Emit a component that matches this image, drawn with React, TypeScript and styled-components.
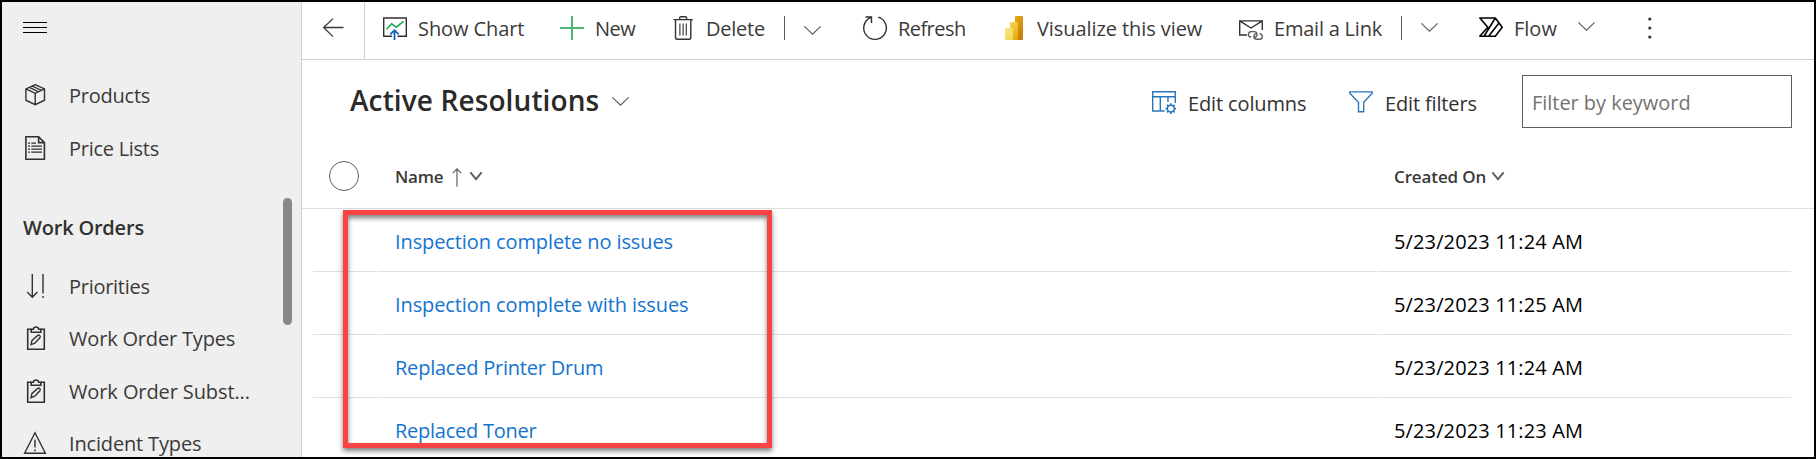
import React from "react";
import styled, { createGlobalStyle } from "styled-components";

const Global = createGlobalStyle`
  *, *::before, *::after { box-sizing: border-box; }
  body {
    margin: 0;
    background: #fff;
    font-family: "Open Sans", "Noto Sans", sans-serif;
    font-size: 20px;
    line-height: 28px;
    color: #3b3a39;
  }
  svg { display: block; flex: none; overflow: visible; }
`;

const Frame = styled.div`
  display: flex;
  width: 1816px;
  height: 459px;
  border: 2px solid #000;
  overflow: hidden;
  background: #fff;
`;

const Label = styled.span<{ $track?: number }>`
  white-space: nowrap;
  letter-spacing: ${(p) => p.$track ?? 0}px;
`;

/* Sidebar */

const Sidebar = styled.nav`
  position: relative;
  flex: none;
  width: 300px;
  height: 455px;
  border-right: 1px solid #d2d0ce;
  background: #efefef;
  overflow: hidden;
`;

const MenuButton = styled.div`
  height: 67px;
  padding: 20px 0 0 21px;
`;

const NavItem = styled.div<{ $height: number }>`
  display: flex;
  align-items: center;
  gap: 22px;
  height: ${(p) => p.$height}px;
  padding-left: 21px;

  svg { margin-top: -2px; }
`;

const NavHeading = styled.div`
  height: 85px;
  padding: 39px 0 0 21px;
  font-weight: 600;
  color: #323130;
`;

const ScrollThumb = styled.div`
  position: absolute;
  top: 196px;
  left: 281px;
  width: 9px;
  height: 127px;
  border-radius: 5px;
  background: #888;
`;

/* Main area */

const Main = styled.main`
  flex: 1;
  min-width: 0;
`;

const Toolbar = styled.div`
  display: flex;
  height: 58px;
  border-bottom: 1px solid #d2d0ce;
`;

const BackCell = styled.div`
  flex: none;
  width: 63px;
  border-right: 1px solid #d2d0ce;
  padding: 16px 0 0 20px;
`;

const Commands = styled.div`
  display: flex;
  padding: 14px 0 0 18px;
  height: 57px;
`;

const Command = styled.div<{ $width: number }>`
  display: flex;
  gap: 11px;
  width: ${(p) => p.$width}px;
  height: 24px;
`;

const CommandLabel = styled(Label)`
  margin-top: -1px;
`;

const Divider = styled.div`
  width: 1px;
  height: 24px;
  margin-right: 19px;
  background: #605e5c;
`;

const ChevronSlot = styled.div<{ $width: number; $top: number }>`
  width: ${(p) => p.$width}px;
  padding-top: ${(p) => p.$top}px;
`;

const ViewBar = styled.div`
  display: flex;
  height: 85px;
  padding: 15px 22px 0 48px;
`;

const ViewTitle = styled.h1`
  display: flex;
  gap: 13px;
  flex: 1;
  margin: 0;
  padding-top: 6px;
  font-size: 28px;
  font-weight: 600;
  line-height: 38px;
  color: #2b2a29;
`;

const TitleChevron = styled.span`
  padding-top: 16px;
`;

const ViewAction = styled.div<{ $width: number }>`
  display: flex;
  gap: 12px;
  width: ${(p) => p.$width}px;
  padding-top: 14px;
  color: #323130;
`;

const ActionLabel = styled(Label)`
  margin-top: 1px;
`;

const IconDrop = styled.span`
  padding-top: 2px;
`;

const FilterInput = styled.div`
  width: 270px;
  height: 53px;
  border: 1px solid #605e5c;
  padding: 13px 0 0 9px;
  color: #757371;
`;

/* Grid */

const HeaderRow = styled.div`
  display: grid;
  grid-template-columns: 93px 999px 1fr;
  height: 64px;
  border-bottom: 1px solid #e1dfdd;
  font-size: 17px;
  font-weight: 600;
`;

const HeaderCell = styled.div`
  display: flex;
  padding-top: 18px;
`;

const SelectAll = styled.div`
  width: 30px;
  height: 30px;
  margin: 16px 0 0 27px;
  border: 1px solid #605e5c;
  border-radius: 50%;
`;

const Rows = styled.div`
  position: relative;
  height: 248px;
  padding: 0 23px 0 11px;
`;

const Row = styled.div`
  display: grid;
  grid-template-columns: 63px 999px 1fr;
  column-gap: 1px;
  height: 63px;
`;

const Cell = styled.div<{ $pad?: number }>`
  border-bottom: 1px solid #e1dfdd;
  padding: 19px 0 0 ${(p) => p.$pad ?? 0}px;
  color: #000;
`;

const RecordLink = styled(Label)`
  color: #1374cf;
`;

const Highlight = styled.div`
  position: absolute;
  top: 1px;
  left: 41px;
  width: 429px;
  height: 238px;
  border: 5px solid #fb4343;
  box-shadow: 0 3px 5px rgba(0, 0, 0, 0.5), inset 0 3px 5px rgba(0, 0, 0, 0.5);
`;

/* Icons */

const Chevron = ({ w = 17, h = 9, color = "#605e5c", weight = 1.2 }) => (
  <svg width={w} height={h} viewBox={`0 0 ${w} ${h}`} fill="none" stroke={color} strokeWidth={weight}>
    <path d={`M.4.4 L${w / 2} ${h - 0.8} L${w - 0.4}.4`} />
  </svg>
);

const Icon = ({ children, color = "#323130", weight = 1.4 }: { children: React.ReactNode; color?: string; weight?: number }) => (
  <svg width="24" height="24" viewBox="0 0 24 24" fill="none" stroke={color} strokeWidth={weight}>
    {children}
  </svg>
);

const MenuIcon = () => (
  <svg width="24" height="12" viewBox="0 0 24 12" stroke="#000" strokeWidth="1">
    <path d="M0 .5H24M0 5.5H24M0 10.5H24" />
  </svg>
);

const BoxIcon = () => (
  <Icon>
    <path d="M12.2 1.7 21.5 5.9V17.2L12.2 21.7 2.9 17.2V5.9ZM2.9 5.9 12.2 10.3 21.5 5.9M12.2 10.3V21.5" />
    <path strokeWidth="1.2" d="M6.2 4.4 15.4 8.6M9.2 3.1 18.4 7.3" />
  </Icon>
);

const ListIcon = () => (
  <Icon weight={1.6}>
    <path d="M2.9.8H15.6L21.4 6.6V23.2H2.9ZM15.6.8V6.6H21.4" />
    <path strokeWidth="1.3" d="M5 7.2H7M8.3 7.2H13M5 10.2H7M8.3 10.2H19M5 13.2H7M8.3 13.2H19M5 16.2H7M8.3 16.2H19" />
  </Icon>
);

const PriorityIcon = () => (
  <Icon weight={1.4}>
    <path d="M9.3 0V23M4.2 18 9.3 23.2 14.4 18M20 0V19.5M20 22V24" />
  </Icon>
);

const ClipboardIcon = () => (
  <Icon weight={1.6}>
    <path d="M8.5 3.2H4.7V23.2H21.3V3.2H17.5" />
    <path d="M8.2 6.2V3.2H10.3C10.6 1.8 11.6 1 13 1S15.4 1.8 15.7 3.2H17.8V6.2Z" />
    <path d="M8 18.6 9 14.4 14.8 9.4C16.3 8.4 18 10.2 16.9 11.7L11.8 17.2Z" strokeWidth="1.4" />
  </Icon>
);

const WarningIcon = () => (
  <Icon weight={1.4}>
    <path d="M12 1.8 22.4 22.3H1.6ZM12 8.5V16.5M12 18.6V20.2" />
  </Icon>
);

const BackIcon = () => (
  <svg width="24" height="20" viewBox="0 0 24 20" fill="none" stroke="#3b3a39" strokeWidth="1.3">
    <path d="M21.5 9.5H1.5M11 .6 1.6 9.5 11 18.6" />
  </svg>
);

const ChartIcon = () => (
  <Icon weight={1.4}>
    <path d="M9 20.3H.7V2H23.3V20.3H14.5" />
    <path stroke="#1aab50" strokeWidth="1.6" d="M3.5 13.2 8.7 7.8 13.3 11.2 20.5 5.3" />
    <path stroke="#1267b4" strokeWidth="1.8" d="M11.5 24V14.8M7.3 18.4 11.5 14.2 15.7 18.4" />
  </Icon>
);

const PlusIcon = () => (
  <Icon color="#4bb777" weight={2}>
    <path d="M0 12H24M12 0V24" />
  </Icon>
);

const TrashIcon = () => (
  <Icon>
    <path d="M2.5 3.6H21.8M8.7 3.6V2C8.7 1.2 9.2.7 10 .7H14.3C15.1.7 15.6 1.2 15.6 2V3.6M4.5 3.6V21.5C4.5 22.6 5.2 23.3 6.3 23.3H18C19.1 23.3 19.8 22.6 19.8 21.5V3.6" />
    <path strokeWidth="1.1" d="M8.9 7.5V19.5M12.1 7.5V19.5M15.3 7.5V19.5" />
  </Icon>
);

const RefreshIcon = () => (
  <Icon weight={1.4}>
    <path d="M15.2 1.2A11.3 11.3 0 1 1 7.5 1.7M2.5 1H8.5V7" />
  </Icon>
);

const PowerBiIcon = () => (
  <svg width="24" height="24" viewBox="0 0 24 24">
    <defs>
      <linearGradient id="barBack" x1="0" y1="0" x2="0.4" y2="1">
        <stop offset="0" stopColor="#e6ad10" />
        <stop offset="1" stopColor="#c87e0e" />
      </linearGradient>
      <linearGradient id="barMid" x1="0" y1="0" x2="0.4" y2="1">
        <stop offset="0" stopColor="#f6d751" />
        <stop offset="1" stopColor="#e6ad10" />
      </linearGradient>
      <linearGradient id="barFront" x1="0" y1="0" x2="0.4" y2="1">
        <stop offset="0" stopColor="#f9e589" />
        <stop offset="1" stopColor="#f6d751" />
      </linearGradient>
    </defs>
    <rect x="13" y="0" width="8" height="24" rx="0.8" fill="url(#barBack)" />
    <path d="M8 6.8Q8 6 8.8 6H15.2Q16 6 16 6.8V24H8Z" fill="url(#barMid)" />
    <path d="M3 12.8Q3 12 3.8 12H10.2Q11 12 11 12.8V24H3.8Q3 24 3 23.2Z" fill="url(#barFront)" />
  </svg>
);

const MailLinkIcon = () => (
  <Icon weight={1.4}>
    <path d="M8 19H.7V4.9H23.3V14M.7 4.9 12 12 23.3 4.9" />
    <g stroke="#605e5c" strokeWidth="1.4">
      <path d="M12.2 21.2C8.7 21 8.3 16 12.2 15.6H15C19.2 15.8 18.8 21 15.2 21.2" />
      <path d="M20.4 17.6C24.4 18 24.2 23 20.6 23.3H17.8C13.8 23 14 17.8 17.6 17.6" />
    </g>
  </Icon>
);

const FlowIcon = () => (
  <Icon color="#000" weight={1.6}>
    <path strokeLinejoin="round" d="M.8 2H16.3L23.2 11.3 16.3 20.2H.8L8.8 11.3ZM5.8 7.9 8.8 11.3M16.3 2 5.2 20M20 7 9.8 20" />
  </Icon>
);

const MoreIcon = () => (
  <svg width="4" height="24" viewBox="0 0 4 24" fill="#323130">
    <circle cx="1.8" cy="3" r="1.6" />
    <circle cx="1.8" cy="12" r="1.6" />
    <circle cx="1.8" cy="21" r="1.6" />
  </svg>
);

const ColumnsIcon = () => (
  <Icon color="#2a76bb" weight={1.4}>
    <path d="M12.5 20H.7V.8H23.3V12M.7 5.8H23.3M8.3 5.8V20M16 5.8V11" />
    <circle cx="18.8" cy="17.6" r="3.4" />
    <path
      strokeWidth="1.7"
      d="M18.8 14.2V12.3M18.8 21V22.9M15.4 17.6H13.5M22.2 17.6H24.1M16.4 15.2 15.1 13.9M21.2 20 22.5 21.3M21.2 15.2 22.5 13.9M16.4 20 15.1 21.3"
    />
  </Icon>
);

const FunnelIcon = () => (
  <Icon color="#2a76bb" weight={1.4}>
    <path d="M.8.9H23.2V2.3L14.7 11.3V20.8H9.5V11.3L.8 2.3Z" />
  </Icon>
);

const SortUpIcon = () => (
  <svg width="10" height="19" viewBox="0 0 10 19" fill="none" stroke="#605e5c" strokeWidth="1.2">
    <path d="M5 18.5V1M.8 5.2 5 .9 9.2 5.2" />
  </svg>
);

const SortSlot = styled.span<{ $left: number; $top: number }>`
  padding: ${(p) => p.$top}px 0 0 ${(p) => p.$left}px;
`;

const records = [
  { name: "Inspection complete no issues", created: "5/23/2023 11:24 AM", track: -0.1 },
  { name: "Inspection complete with issues", created: "5/23/2023 11:25 AM", track: -0.1 },
  { name: "Replaced Printer Drum", created: "5/23/2023 11:24 AM", track: -0.22 },
  { name: "Replaced Toner", created: "5/23/2023 11:23 AM", track: -0.25 },
];

export default function App() {
  return (
    <>
      <Global />
      <Frame>
        <Sidebar>
          <MenuButton><MenuIcon /></MenuButton>
          <NavItem $height={53}><BoxIcon /><Label $track={-0.24}>Products</Label></NavItem>
          <NavItem $height={53}><ListIcon /><Label $track={-0.27}>Price Lists</Label></NavItem>
          <NavHeading><Label $track={-0.2}>Work Orders</Label></NavHeading>
          <NavItem $height={53}><PriorityIcon /><Label $track={-0.28}>Priorities</Label></NavItem>
          <NavItem $height={52}><ClipboardIcon /><Label $track={-0.18}>Work Order Types</Label></NavItem>
          <NavItem $height={53}><ClipboardIcon /><Label $track={-0.1}>Work Order Subst...</Label></NavItem>
          <NavItem $height={51}><WarningIcon /><Label $track={-0.16}>Incident Types</Label></NavItem>
          <ScrollThumb />
        </Sidebar>
        <Main>
          <Toolbar>
            <BackCell><BackIcon /></BackCell>
            <Commands>
              <Command $width={177}><ChartIcon /><CommandLabel $track={-0.09}>Show Chart</CommandLabel></Command>
              <Command $width={111}><PlusIcon /><CommandLabel $track={-0.5}>New</CommandLabel></Command>
              <Command $width={113}><TrashIcon /><CommandLabel $track={-0.25}>Delete</CommandLabel></Command>
              <Divider />
              <ChevronSlot $width={59} $top={10}><Chevron /></ChevronSlot>
              <Command $width={139}><RefreshIcon /><CommandLabel $track={-0.56}>Refresh</CommandLabel></Command>
              <Command $width={237}><PowerBiIcon /><CommandLabel $track={-0.08}>Visualize this view</CommandLabel></Command>
              <Command $width={162}><MailLinkIcon /><CommandLabel $track={-0.22}>Email a Link</CommandLabel></Command>
              <Divider />
              <ChevronSlot $width={58} $top={7}><Chevron /></ChevronSlot>
              <Command $width={99}><FlowIcon /><CommandLabel $track={0}>Flow</CommandLabel></Command>
              <ChevronSlot $width={70} $top={6}><Chevron /></ChevronSlot>
              <MoreIcon />
            </Commands>
          </Toolbar>
          <ViewBar>
            <ViewTitle>
              <Label $track={0.11}>Active Resolutions</Label>
              <TitleChevron><Chevron /></TitleChevron>
            </ViewTitle>
            <ViewAction $width={197}>
              <IconDrop><ColumnsIcon /></IconDrop>
              <ActionLabel $track={-0.13}>Edit columns</ActionLabel>
            </ViewAction>
            <ViewAction $width={173}>
              <IconDrop><FunnelIcon /></IconDrop>
              <ActionLabel $track={-0.15}>Edit filters</ActionLabel>
            </ViewAction>
            <FilterInput><Label $track={-0.04}>Filter by keyword</Label></FilterInput>
          </ViewBar>
          <HeaderRow>
            <SelectAll />
            <HeaderCell>
              <Label $track={-0.2}>Name</Label>
              <SortSlot $left={9} $top={5}><SortUpIcon /></SortSlot>
              <SortSlot $left={8} $top={9}><Chevron w={12} h={8} weight={1.9} /></SortSlot>
            </HeaderCell>
            <HeaderCell>
              <Label $track={-0.12}>Created On</Label>
              <SortSlot $left={6} $top={9}><Chevron w={12} h={8} weight={1.9} /></SortSlot>
            </HeaderCell>
          </HeaderRow>
          <Rows>
            {records.map((r) => (
              <Row key={r.name}>
                <Cell />
                <Cell $pad={18}><RecordLink $track={r.track}>{r.name}</RecordLink></Cell>
                <Cell $pad={17}><Label $track={0.13}>{r.created}</Label></Cell>
              </Row>
            ))}
            <Highlight />
          </Rows>
        </Main>
      </Frame>
    </>
  );
}
